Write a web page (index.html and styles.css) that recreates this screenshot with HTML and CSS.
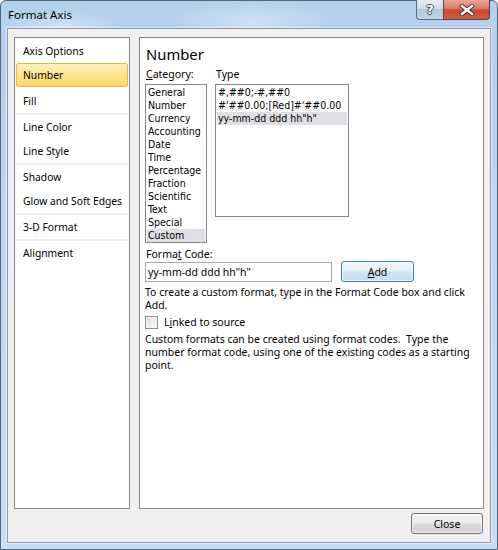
FILE: index.html
```html
<!DOCTYPE html>
<html>
<head>
<meta charset="utf-8">
<link rel="stylesheet" href="styles.css">
</head>
<body>
<div class="window">
  <div class="titlebar">
    <span class="title">Format Axis</span>
    <div class="caption-btns">
      <div class="cbtn help"><span class="help-glyph">?</span></div>
      <div class="cbtn close">
        <svg width="16" height="12" viewBox="0 0 16 12">
          <path d="M3 2 L13 10 M13 2 L3 10" stroke="#3a2a28" stroke-width="4.2" stroke-linecap="square" fill="none"/>
          <path d="M3 2 L13 10 M13 2 L3 10" stroke="#ffffff" stroke-width="2.4" stroke-linecap="square" fill="none"/>
        </svg>
      </div>
    </div>
  </div>
  <div class="client">
    <div class="panels">
      <div class="nav">
        <div class="nav-item">Axis Options</div>
        <div class="nav-item selected">Number</div>
        <div class="nav-item">Fill</div>
        <div class="nav-sep"></div>
        <div class="nav-item">Line Color</div>
        <div class="nav-item">Line Style</div>
        <div class="nav-sep"></div>
        <div class="nav-item">Shadow</div>
        <div class="nav-item">Glow and Soft Edges</div>
        <div class="nav-sep"></div>
        <div class="nav-item">3-D Format</div>
        <div class="nav-sep"></div>
        <div class="nav-item">Alignment</div>
      </div>
      <div class="content">
        <div class="heading">Number</div>
        <div class="lists">
          <div class="col">
            <div class="label"><u>C</u>ategory:</div>
            <div class="listbox cat">
              <div class="li">General</div>
              <div class="li">Number</div>
              <div class="li">Currency</div>
              <div class="li">Accounting</div>
              <div class="li">Date</div>
              <div class="li">Time</div>
              <div class="li">Percentage</div>
              <div class="li">Fraction</div>
              <div class="li">Scientific</div>
              <div class="li">Text</div>
              <div class="li">Special</div>
              <div class="li sel">Custom</div>
            </div>
          </div>
          <div class="col">
            <div class="label">Type</div>
            <div class="listbox type">
              <div class="li">#,##0;-#,##0</div>
              <div class="li">#'##0.00;[Red]#'##0.00</div>
              <div class="li sel">yy-mm-dd ddd hh"h"</div>
            </div>
          </div>
        </div>
        <div class="label fc-label">Forma<u>t</u> Code:</div>
        <div class="code-row">
          <div class="input">yy-mm-dd ddd hh"h"</div>
          <div class="btn add-btn"><u>A</u>dd</div>
        </div>
        <div class="para first">To create a custom format, type in the Format Code box and click Add.</div>
        <div class="check-row">
          <span class="checkbox"></span>
          <span>L<u>i</u>nked to source</span>
        </div>
        <div class="para second">Custom formats can be created using format codes.&nbsp; Type the number format code, using one of the existing codes as a starting point.</div>
      </div>
    </div>
    <div class="footer">
      <div class="btn close-btn">Close</div>
    </div>
  </div>
</div>
</body>
</html>
```
FILE: styles.css
```css
* { box-sizing: border-box; }
html, body { margin: 0; padding: 0; }
body {
  width: 498px;
  height: 550px;
  overflow: hidden;
  background: #ffffff;
  font-family: "Noto Sans", "Open Sans", sans-serif;
  font-size: 10.5px;
  color: #000;
}
.window {
  width: 498px;
  height: 550px;
  border: 1px solid #52647a;
  border-radius: 6px 6px 0 0;
  background:
    radial-gradient(ellipse 90px 30px at 60px 30px, rgba(255,255,255,0.45), rgba(255,255,255,0) 70%),
    radial-gradient(ellipse 120px 30px at 250px 20px, rgba(255,255,255,0.35), rgba(255,255,255,0) 70%),
    linear-gradient(to bottom, #b4d0ed 0%, #c0d8f0 40%, #c7ddf2 100%);
  padding: 0 6px 6px 6px;
  display: flex;
  flex-direction: column;
}
.titlebar {
  height: 27px;
  display: flex;
  justify-content: space-between;
  align-items: flex-start;
  flex: none;
}
.title {
  font-size: 11.5px;
  line-height: 14px;
  margin-top: 7px;
  margin-left: 1px;
  color: #000;
}
.caption-btns {
  display: flex;
  margin-top: -1px;
  margin-right: 1px;
}
.cbtn {
  height: 20px;
  border: 1px solid #5b6b80;
  border-top: none;
  display: flex;
  align-items: center;
  justify-content: center;
}
.help {
  width: 27px;
  border-right: none;
  border-radius: 0 0 0 4px;
  background: linear-gradient(to bottom, #e4edf7 0%, #cfdcea 45%, #b3c6db 50%, #c3d4e6 100%);
}
.help-glyph {
  font-family: "DejaVu Sans", sans-serif;
  font-weight: bold;
  font-size: 13px;
  line-height: 13px;
  color: #fff;
  text-shadow: 1px 0 0 #3d4a5a, -1px 0 0 #3d4a5a, 0 1px 0 #3d4a5a, 0 -1px 0 #3d4a5a;
}
.close {
  width: 47px;
  border-radius: 0 0 4px 0;
  background: linear-gradient(to bottom, #e9a899 0%, #dc7a66 45%, #c94a35 52%, #cc5a43 100%);
  border-color: #6a3a34;
}
.client {
  flex: 1;
  background: #f0f0f0;
  border: 1px solid #8798ac;
  box-shadow: 0 0 0 1px rgba(255,255,255,0.55);
  padding: 8px 6px 0 6px;
  display: flex;
  flex-direction: column;
}
.panels {
  display: flex;
  gap: 9px;
  height: 472px;
}
.nav {
  width: 116px;
  background: #fff;
  border: 1px solid #828790;
  padding: 1px;
  font-size: 10.3px;
}
.nav-item {
  height: 24px;
  line-height: 24px;
  padding-left: 7px;
  white-space: nowrap;
}
.nav-item.selected {
  border: 1px solid #e5b748;
  border-radius: 2px;
  line-height: 22px;
  padding-left: 6px;
  background: linear-gradient(to bottom, #fff1c0 0%, #fde38e 50%, #fbd86c 100%);
  margin-bottom: 2px;
}
.nav-sep {
  height: 2px;
  background: #efeff2;
}
.content {
  flex: 1;
  background: #fff;
  border: 1px solid #828790;
  padding-left: 5px;
}
.heading {
  font-size: 14.8px;
  line-height: 20px;
  margin-top: 6px;
  margin-left: 1px;
}
.lists {
  display: flex;
  gap: 8px;
  margin-top: 3px;
}
.col { display: flex; flex-direction: column; }
.label {
  line-height: 14px;
  padding-left: 1px;
  white-space: nowrap;
}
.listbox {
  margin-top: 3px;
  border: 1px solid #828790;
  padding: 1px;
  font-family: "DejaVu Sans Condensed", "DejaVu Sans", sans-serif;
  font-stretch: condensed;
  font-size: 10.5px;
}
.listbox.cat { width: 62px; height: 159px; }
.listbox.type { width: 134px; height: 133px; }
.li {
  height: 13px;
  line-height: 13px;
  padding-left: 1px;
  white-space: nowrap;
}
.li.sel { background: #dedee3; }
.fc-label { margin-top: 4px; }
.code-row {
  display: flex;
  align-items: flex-start;
  gap: 9px;
  margin-top: 1px;
}
.input {
  width: 187px;
  height: 20px;
  border: 1px solid #a3a7ae;
  line-height: 18px;
  padding-left: 2px;
  white-space: nowrap;
}
.btn {
  display: flex;
  align-items: center;
  justify-content: center;
  border-radius: 3px;
  background: linear-gradient(to bottom, #f4f4f4 0%, #ececec 48%, #dcdcdc 52%, #d0d0d0 100%);
  box-shadow: inset 0 0 0 1px rgba(255,255,255,0.7);
}
.add-btn {
  width: 73px;
  height: 21px;
  margin-top: -1px;
  border: 1px solid #3c7fb1;
  background: linear-gradient(to bottom, #f1f7fb 0%, #e4eff7 48%, #d2e4f1 52%, #c7dcec 100%);
}
.para { line-height: 13px; padding-right: 4px; }
.para.first { margin-top: 4px; }
.check-row {
  display: flex;
  align-items: center;
  height: 16px;
  margin-top: 2px;
  gap: 6px;
}
.checkbox {
  width: 13px;
  height: 13px;
  border: 1px solid #8e8f8f;
  background: linear-gradient(135deg, #dcdcdc 0%, #f2f2f2 70%, #fafafa 100%);
  box-shadow: inset 0 0 0 1px #f4f4f4;
}
.para.second { margin-top: 3px; }
.footer {
  display: flex;
  justify-content: flex-end;
  padding-right: 1px;
  margin-top: 4px;
}
.close-btn {
  width: 72px;
  height: 21px;
  border: 1px solid #707070;
}
```
